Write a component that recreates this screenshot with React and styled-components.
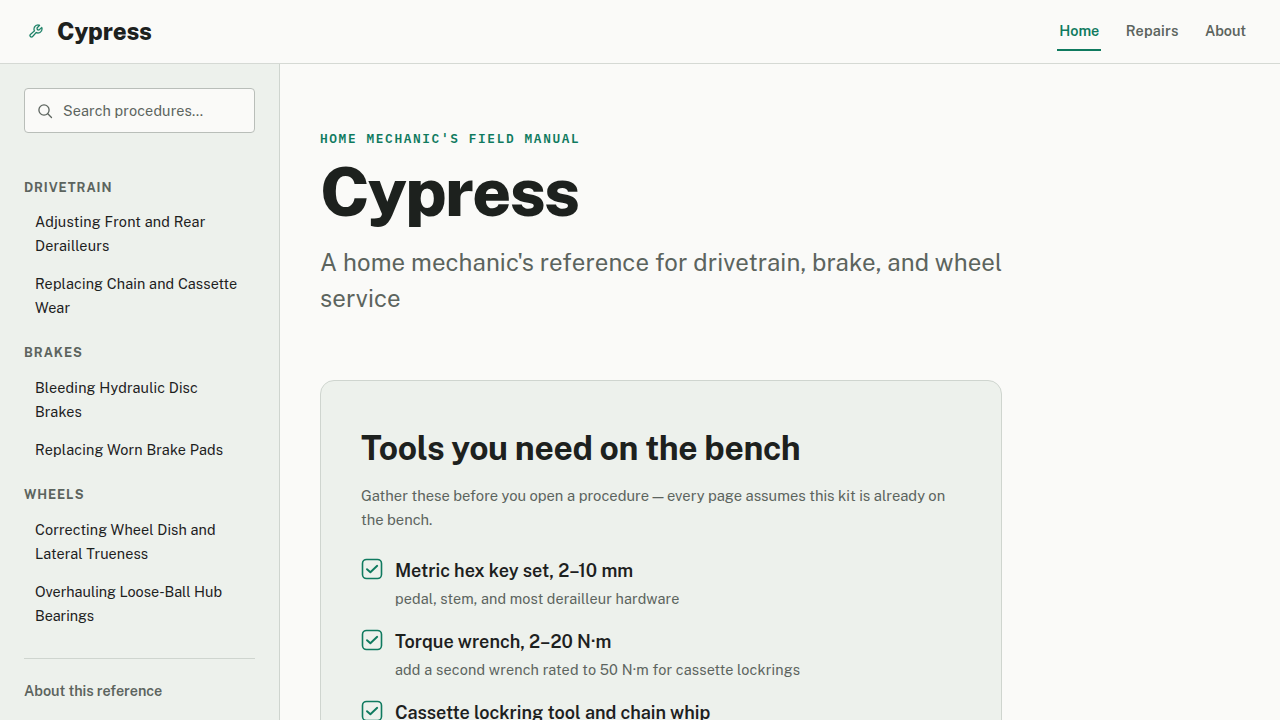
import React, { useState } from 'react';
import styled, { createGlobalStyle } from 'styled-components';
import { PiWrench } from 'react-icons/pi';

const sections = [
  {
    name: 'Drivetrain',
    links: [
      { text: 'Adjusting Front and Rear Derailleurs', tracking: 0.16 },
      { text: 'Replacing Chain and Cassette Wear', tracking: 0.12 },
    ],
  },
  {
    name: 'Brakes',
    links: [
      { text: 'Bleeding Hydraulic Disc Brakes', tracking: 0.14 },
      { text: 'Replacing Worn Brake Pads', tracking: 0.17 },
    ],
  },
  {
    name: 'Wheels',
    links: [
      { text: 'Correcting Wheel Dish and Lateral Trueness', tracking: 0.1 },
      { text: 'Overhauling Loose-Ball Hub Bearings', tracking: -0.03 },
    ],
  },
];

const pages = [
  { name: 'Home', tracking: 0 },
  { name: 'Repairs', tracking: 0.2 },
  { name: 'About', tracking: -0.1 },
];

const tools = [
  { name: 'Metric hex key set, 2–10 mm', note: 'pedal, stem, and most derailleur hardware', tracking: 0.107 },
  { name: 'Torque wrench, 2–20 N·m', note: 'add a second wrench rated to 50 N·m for cassette lockrings', tracking: 0.163 },
  { name: 'Cassette lockring tool and chain whip', note: '', tracking: 0 },
];

const SearchIcon = () => (
  <svg width='16' height='16' viewBox='0 0 16 16' fill='none' stroke='currentColor' strokeWidth='1.3' strokeLinecap='round'>
    <circle cx='7' cy='7' r='5.1' />
    <path d='m10.8 10.8 3.7 3.7' />
  </svg>
);

const CheckIcon = () => (
  <svg width='22' height='22' viewBox='0 0 22 22' fill='none' stroke='currentColor' strokeWidth='1.6' strokeLinecap='round' strokeLinejoin='round'>
    <rect x='1.5' y='1.5' width='19' height='19' rx='4' />
    <path d='m6 11.2 3.4 3.1L16.2 7.8' strokeWidth='1.9' />
  </svg>
);

const App = () => {
  const [page, setPage] = useState('Home');
  const [query, setQuery] = useState('');

  return (
    <>
      <GlobalStyle />
      <Header>
        <Brand href='#'>
          <BrandMark>
            <PiWrench size={16} strokeWidth={4} />
          </BrandMark>
          Cypress
        </Brand>
        <Nav>
          {pages.map(({ name, tracking }) => (
            <NavLink key={name} href='#' $active={name === page} $tracking={tracking} onClick={() => setPage(name)}>
              {name}
            </NavLink>
          ))}
        </Nav>
      </Header>
      <Layout>
        <Sidebar>
          <SearchBox>
            <SearchIcon />
            <SearchInput
              value={query}
              placeholder='Search procedures…'
              onChange={(e) => setQuery(e.target.value)}
            />
          </SearchBox>
          <Contents>
            {sections.map(({ name, links }) => (
              <section key={name}>
                <SectionTitle>{name}</SectionTitle>
                {links.map(({ text, tracking }) => (
                  <ProcedureLink key={text} href='#' $tracking={tracking}>
                    {text}
                  </ProcedureLink>
                ))}
              </section>
            ))}
          </Contents>
          <SidebarFooter>
            <FooterLink href='#'>About this reference</FooterLink>
          </SidebarFooter>
        </Sidebar>
        <Main>
          <Eyebrow>Home mechanic's field manual</Eyebrow>
          <Title>Cypress</Title>
          <Lead>A home mechanic's reference for drivetrain, brake, and wheel service</Lead>
          <Card>
            <CardTitle>Tools you need on the bench</CardTitle>
            <CardText>
              Gather these before you open a procedure — every page assumes this kit is already on the bench.
            </CardText>
            <ToolList>
              {tools.map(({ name, note, tracking }) => (
                <Tool key={name}>
                  <CheckIcon />
                  <div>
                    <ToolName>{name}</ToolName>
                    <ToolNote $tracking={tracking}>{note}</ToolNote>
                  </div>
                </Tool>
              ))}
            </ToolList>
          </Card>
        </Main>
      </Layout>
    </>
  );
};

export default App;

const GlobalStyle = createGlobalStyle`
  * {
    box-sizing: border-box;
    margin: 0;
    padding: 0;
  }
  body {
    height: 100vh;
    overflow: hidden;
    background: #fafaf8;
    color: #1d211e;
    font-family: 'Public Sans', Inter, sans-serif;
  }
  a {
    color: inherit;
    text-decoration: none;
  }
  svg {
    flex-shrink: 0;
  }
`;

const Header = styled.header`
  display: flex;
  align-items: center;
  justify-content: space-between;
  height: 64px;
  padding: 0 32px 0 24px;
  border-bottom: 1px solid #d5d9d4;
`;

const Brand = styled.a`
  display: flex;
  align-items: center;
  gap: 11px;
  margin-bottom: 1px;
  font-size: 24px;
  font-weight: 800;
  line-height: 32px;
  letter-spacing: -0.15px;
`;

const BrandMark = styled.span`
  display: flex;
  justify-content: center;
  width: 22px;
  padding-left: 1px;
  color: #0f7a5f;
`;

const Nav = styled.nav`
  display: flex;
  gap: 22.4px;
`;

const NavLink = styled.a`
  padding: 8px 2px 7px;
  border-bottom: 2px solid ${({ $active }) => ($active ? '#0f7a5f' : 'transparent')};
  color: ${({ $active }) => ($active ? '#0f7a5f' : '#5c645e')};
  font-size: 14.4px;
  font-weight: 600;
  line-height: 22px;
  letter-spacing: ${({ $tracking }) => $tracking}px;
`;

const Layout = styled.div`
  display: grid;
  grid-template-columns: 280px 1fr;
  height: calc(100vh - 64px);
`;

const Sidebar = styled.aside`
  padding: 24px;
  overflow: hidden;
  border-right: 1px solid #cfd5cf;
  background: #edf1ec;
`;

const SearchBox = styled.label`
  display: flex;
  align-items: center;
  gap: 10px;
  height: 45px;
  padding: 0 12px;
  border: 1px solid #b9beb9;
  border-radius: 4px;
  background: #fafaf8;
  color: #5c645e;
`;

const SearchInput = styled.input`
  flex: 1;
  min-width: 0;
  border: 0;
  outline: 0;
  background: none;
  color: #1d211e;
  font: 400 14.4px 'Public Sans', Inter, sans-serif;
  letter-spacing: 0.13px;
  &::placeholder {
    color: #5c645e;
  }
`;

const Contents = styled.nav`
  display: flex;
  flex-direction: column;
  gap: 16.1px;
  margin-top: 44.6px;
`;

const SectionTitle = styled.h2`
  margin-bottom: 5.6px;
  color: #5c645e;
  font-size: 12.8px;
  font-weight: 700;
  line-height: 20px;
  letter-spacing: 0.87px;
  text-transform: uppercase;
`;

const ProcedureLink = styled.a`
  display: block;
  padding: 7px 11px;
  font-size: 14.4px;
  line-height: 24px;
  letter-spacing: ${({ $tracking }) => $tracking}px;
`;

const SidebarFooter = styled.div`
  margin-top: 23.5px;
  padding-top: 20px;
  border-top: 1px solid #cfd5cf;
`;

const FooterLink = styled.a`
  color: #5c645e;
  font-size: 14.4px;
  font-weight: 600;
  line-height: 24px;
  letter-spacing: -0.07px;
`;

const Main = styled.main`
  width: 762px;
  padding: 65px 40px 0;
  overflow: hidden;
`;

const Eyebrow = styled.p`
  color: #0f7a5f;
  font-family: 'IBM Plex Mono', 'Liberation Mono', monospace;
  font-size: 12.8px;
  font-weight: 600;
  line-height: 20px;
  letter-spacing: 1.62px;
  text-transform: uppercase;
`;

const Title = styled.h1`
  margin-top: 6.4px;
  font-size: 68px;
  font-weight: 800;
  line-height: 72px;
  letter-spacing: -1.87px;
`;

const Lead = styled.p`
  margin: 16.8px -8px 0 0;
  color: #5c645e;
  font-size: 24px;
  line-height: 36px;
  letter-spacing: 0.105px;
`;

const Card = styled.section`
  margin-top: 63.8px;
  padding: 46.6px 40px 40px;
  border: 1px solid #cfd5cf;
  border-radius: 14px;
  background: #edf1ec;
`;

const CardTitle = styled.h2`
  font-size: 33.6px;
  font-weight: 700;
  line-height: 40px;
  letter-spacing: -0.37px;
`;

const CardText = styled.p`
  margin-top: 16px;
  color: #5c645e;
  font-size: 14.72px;
  line-height: 24px;
`;

const ToolList = styled.ul`
  display: flex;
  flex-direction: column;
  gap: 17px;
  margin-top: 25.4px;
  list-style: none;
`;

const Tool = styled.li`
  display: flex;
  gap: 12px;
  & > svg {
    margin-top: 1px;
    color: #0f7a5f;
  }
`;

const ToolName = styled.p`
  font-size: 18px;
  font-weight: 600;
  line-height: 28px;
`;

const ToolNote = styled.p`
  margin-top: 2px;
  color: #5c645e;
  font-size: 14.4px;
  line-height: 24px;
  letter-spacing: ${({ $tracking }) => $tracking}px;
`;
